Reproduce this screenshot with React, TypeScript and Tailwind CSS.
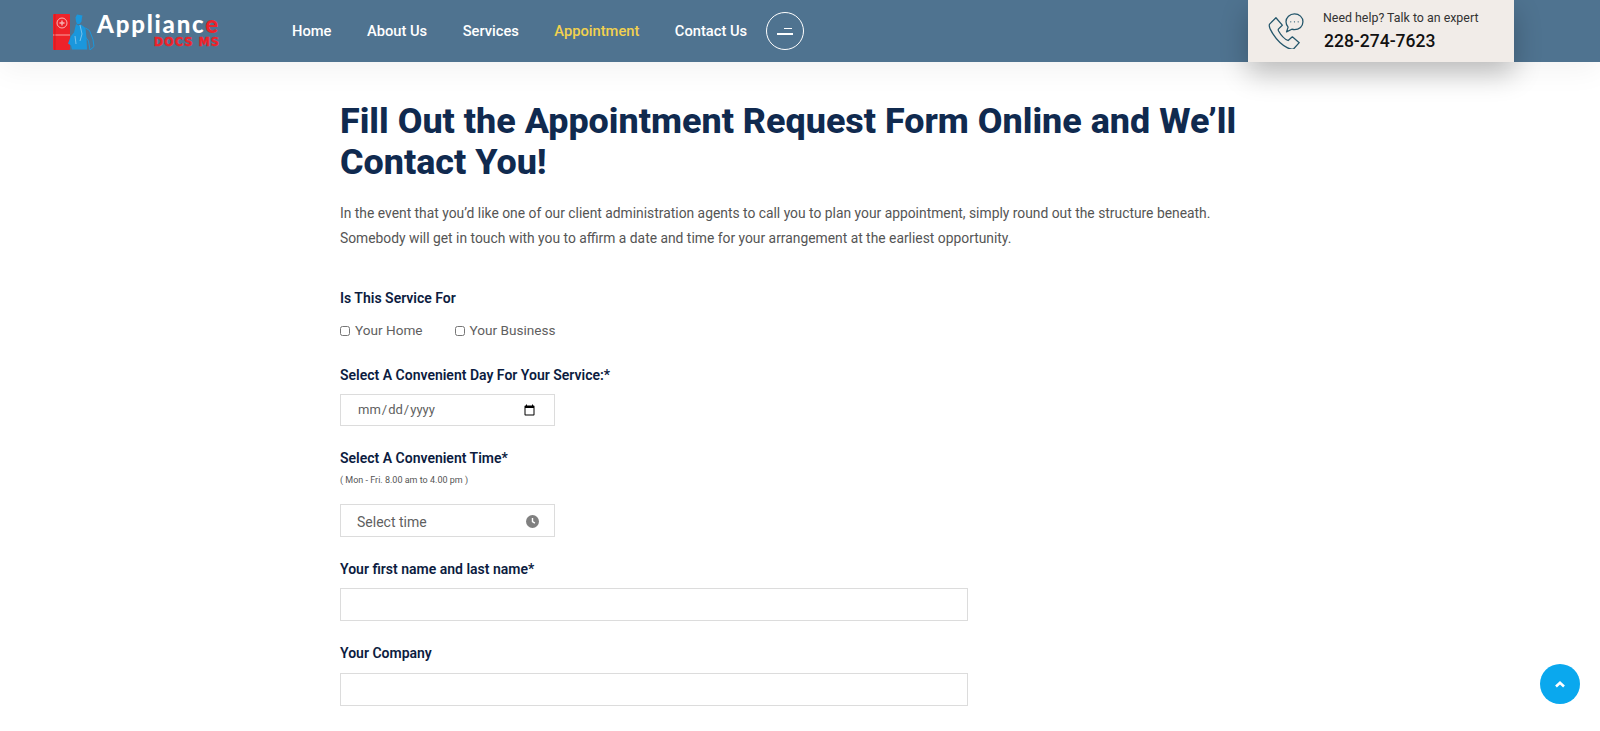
const bodyFont = "font-['Roboto',sans-serif]";

const navItems = [
  { label: "Home", className: "text-white" },
  { label: "About Us", className: "text-white" },
  { label: "Services", className: "text-white" },
  { label: "Appointment", className: "text-[#f2d14e]" },
  { label: "Contact Us", className: "text-white" },
];

function LogoMark() {
  return (
    <svg width="42" height="36" viewBox="0 0 42 36" className="shrink-0">
      {/* fridge */}
      <rect x="0" y="0" width="17" height="36" rx="1" fill="#ee2229" />
      <rect x="0" y="20.500" width="17" height="1" fill="#f8a0a0" />
      <rect x="1.500" y="0" width="0.800" height="36" fill="#c9161d" />
      <circle cx="9" cy="9" r="5" fill="none" stroke="#f5b5b5" strokeWidth="1" />
      <path d="M9 6.500v5M6.500 9h5" stroke="#f5b5b5" strokeWidth="1.400" />
      {/* technician */}
      <path d="M24 .5l5.500 1-.5 2-.5 4-2 2.500h-2.500l-1-2.500-.500-4z" fill="#1a97dc" />
      <path d="M23 10l2.500 1.500 2.500-1 4.500 3.500 1 10 .5 11.500H19l-1-4-3-2 3-7.500 3-3.500z" fill="#1a97dc" />
      <path d="M32.500 14l4 2.500 3.500 9 1 7-4 3.500-1.500-9-3-4" fill="none" stroke="#1a97dc" strokeWidth="1" />
      <path d="M27 11l2 9-2 7M22 22l1 8" fill="none" stroke="#9fd4f2" strokeWidth="0.700" />
    </svg>
  );
}

function Logo() {
  return (
    <div className="flex items-start w-[166px] h-[36px] mt-[1px]">
      <LogoMark />
      <div className="ml-[2px] flex flex-col items-end">
        <div className="font-['Lato',sans-serif] font-black text-[24px] leading-[24px] tracking-[1.800px] text-white whitespace-nowrap -mt-[2px]">
          Applianc<span className="text-[#ee2229]">e</span>
        </div>
        <div className="font-['DejaVu_Sans',sans-serif] font-bold text-[11.500px] leading-[13px] tracking-[0.900px] text-[#ee2229] whitespace-nowrap [-webkit-text-stroke:0.400px_#ee2229]">
          DOCS MS
        </div>
      </div>
    </div>
  );
}

function PhoneIcon() {
  return (
    <svg width="38" height="36" viewBox="0 0 34 34" fill="none" stroke="#24566b" strokeWidth="1.200" strokeLinejoin="round" strokeLinecap="round" className="-ml-[1px]">
      <path d="M7.500 4.500 1.500 10.500c-1 1.500 .5 5 3 9 3.500 5.500 9 11 14 13.500 2.500 1.200 4.500 1.500 6 .5l5-5.500-6.500-5.500-4 3.500c-2.500-1-6.500-4.500-9-9 -.5-1-.5-1.500 0-2l3.500-3.500z" />
      <path d="M25 .8c-4.500 0-8 3.500-8 7.500 0 2 .8 3.700 2 5l-1.500 4.500 5-2.500c.8.300 1.600.5 2.500.5 4.500 0 8-3.300 8-7.500s-3.500-7.500-8-7.500z" />
      <path d="M21.500 8.300h.01M25 8.300h.01M28.500 8.300h.01" />
    </svg>
  );
}

function ClockIcon() {
  return (
    <svg width="13" height="13" viewBox="0 0 13 13">
      <circle cx="6.500" cy="6.500" r="6.500" fill="#808080" />
      <path d="M6.500 3v3.700l2.400 1.500" fill="none" stroke="#fff" strokeWidth="1.400" />
    </svg>
  );
}

function Label({ children }: { children: React.ReactNode }) {
  return <label className="block text-[14px] leading-[20px] font-semibold text-[#0c1c3f]">{children}</label>;
}

function Header() {
  return (
    <header className="relative z-10 flex h-[62px] items-center bg-[#4f7390] pl-[53px] pr-[86px] shadow-[0_8px_30px_rgba(0,0,0,0.05)]">
      <Logo />
      <nav className="ml-[73px] mt-[1px] flex items-center gap-[35.500px] text-[14.700px] font-medium">
        {navItems.map((item) => (
          <a key={item.label} className={item.className}>
            {item.label}
          </a>
        ))}
      </nav>
      <button className="ml-[19px] flex h-[38px] w-[38px] flex-col items-center justify-center gap-[4px] rounded-full border border-white">
        <span className="ml-[6px] block h-[1.500px] w-[8px] bg-white" />
        <span className="block h-[1.500px] w-[16px] bg-white" />
      </button>
      <div className="ml-auto flex h-[62px] w-[266px] items-center bg-[#f1ece8] pl-[20px] shadow-[0_12px_28px_rgba(0,0,0,0.24)]">
        <PhoneIcon />
        <div className="ml-[18px] -mt-[3px]">
          <div className="text-[12.400px] leading-[18px] text-[#333]">Need help? Talk to an expert</div>
          <div className="mt-[4px] ml-[1px] text-[17.500px] leading-[20px] font-medium text-[#111]">228-274-7623</div>
        </div>
      </div>
    </header>
  );
}

const inputClass =
  "block border border-[#dcdcdc] bg-white px-[16px] text-[#5f5f5f] outline-none";

export default function App() {
  return (
    <div className={`${bodyFont} relative h-[731px] overflow-hidden bg-white`}>
      <Header />
      <main className="ml-[340px] w-[920px] pt-[39px]">
        <h1 className="text-[35.900px] leading-[41px] font-extrabold text-[#102a4f]">
          Fill Out the Appointment Request Form Online and We’ll Contact You!
        </h1>
        <p className="mt-[18px] text-[13.850px] leading-[24.500px] text-[#555]">
          In the event that you’d like one of our client administration agents to call you to plan your appointment, simply round out the structure beneath. Somebody will get in touch with you to affirm a date and time for your arrangement at the earliest opportunity.
        </p>

        <form className="mt-[38px]">
          <Label>Is This Service For</Label>
          <div className="mt-[13px] flex items-center text-[13.600px] leading-[19px] text-[#5f5f5f]">
            <input type="checkbox" className="h-[10px] w-[10px]" />
            <span className="ml-[5px]">Your Home</span>
            <input type="checkbox" className="ml-[32px] h-[10px] w-[10px]" />
            <span className="ml-[5px]">Your Business</span>
          </div>

          <div className="mt-[25px]">
            <Label>Select A Convenient Day For Your Service:*</Label>
            <input type="date" className={`${inputClass} mt-[9px] h-[32px] w-[215px] text-[13px]`} />
          </div>

          <div className="mt-[22px]">
            <Label>Select A Convenient Time*</Label>
            <div className="mt-[6px] text-[9px] leading-[12px] text-[#555]">( Mon - Fri. 8.00 am to 4.00 pm )</div>
            <div className="relative mt-[18px] w-[215px]">
              <input type="text" placeholder="Select time" className={`${inputClass} h-[33px] w-full pt-[2px] text-[14px] placeholder:text-[#5f5f5f]`} />
              <span className="absolute right-[16px] top-[11px]">
                <ClockIcon />
              </span>
            </div>
          </div>

          <div className="mt-[22px]">
            <Label>Your first name and last name*</Label>
            <input type="text" className={`${inputClass} mt-[9px] h-[33px] w-[628px]`} />
          </div>

          <div className="mt-[22px]">
            <Label>Your Company</Label>
            <input type="text" className={`${inputClass} mt-[10px] h-[33px] w-[628px]`} />
          </div>
        </form>
      </main>

      <button className="fixed bottom-[27px] right-[20px] flex h-[40px] w-[40px] items-center justify-center rounded-full bg-[#0aa8ee]">
        <svg width="10" height="7" viewBox="0 0 10 7" fill="none" stroke="#fff" strokeWidth="2.600">
          <path d="M1 5.500 5 1.800l4 3.700" />
        </svg>
      </button>
    </div>
  );
}
